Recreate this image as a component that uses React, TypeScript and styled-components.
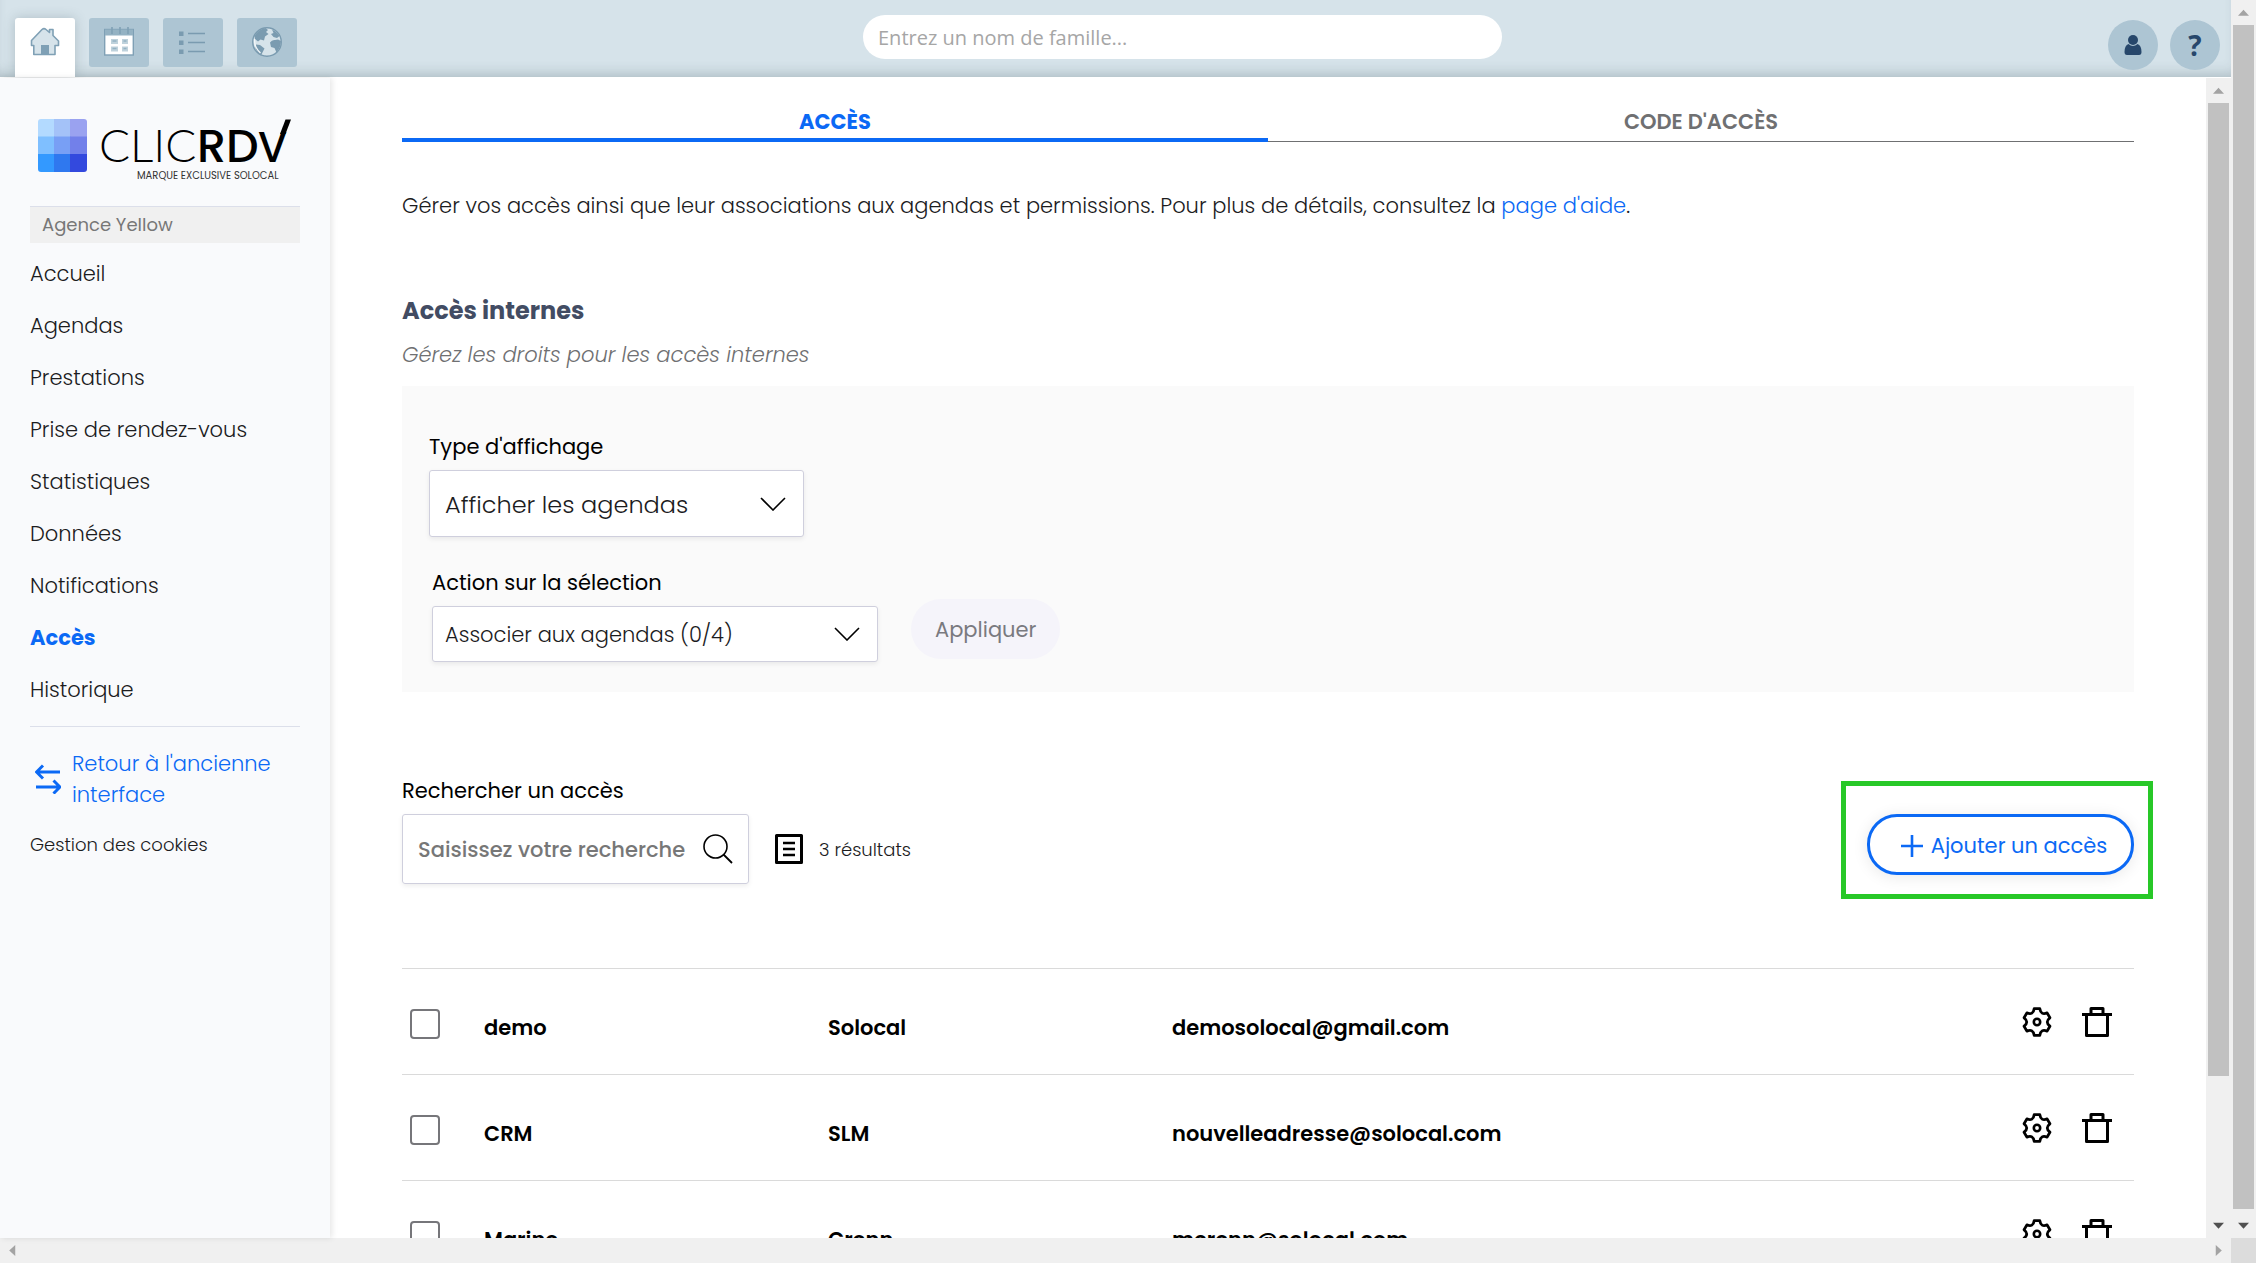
import React from "react";
import styled, { createGlobalStyle } from "styled-components";

const BLUE = "#0b69f5";
const FONT = `Poppins, Inter, "Open Sans", sans-serif`;

const GlobalStyle = createGlobalStyle`
  *, *::before, *::after { box-sizing: border-box; }
  body { margin: 0; background: #fff; font-family: ${FONT}; color: #1c1c1e; overflow: hidden; }
  button, input, select { font-family: inherit; margin: 0; }
  a { text-decoration: none; }
`;

/* ---------- window frame ---------- */

const Window = styled.div`
  display: grid;
  grid-template-columns: minmax(0, 1fr) 25px;
  grid-template-rows: minmax(0, 1fr) 25px;
  height: 100vh;
`;

const Page = styled.div`
  display: flex;
  flex-direction: column;
  min-height: 0;
`;

const Track = styled.div<{ $horizontal?: boolean }>`
  display: flex;
  flex-direction: ${(p) => (p.$horizontal ? "row" : "column")};
  justify-content: space-between;
  flex: 0 0 25px;
  background: #f0f0f0;
`;

const Thumb = styled.div<{ $share: number }>`
  flex: ${(p) => p.$share} 1 0;
  margin: 0 2px;
  background: #c1c1c1;
`;

const Rest = styled.div<{ $share: number }>`
  flex: ${(p) => p.$share} 1 0;
`;

const Arrow = styled.span<{ $dir: "up" | "down" | "left" | "right"; $dim?: boolean }>`
  display: grid;
  place-items: center;
  width: 25px;
  height: 25px;
  &::before {
    content: "";
    width: 11px;
    height: 11px;
    background: ${(p) => (p.$dim ? "#a3a3a3" : "#505050")};
    clip-path: ${(p) =>
      ({
        up: "polygon(0 80%, 50% 25%, 100% 80%)",
        down: "polygon(0 25%, 100% 25%, 50% 80%)",
        left: "polygon(75% 0, 75% 100%, 20% 50%)",
        right: "polygon(25% 0, 80% 50%, 25% 100%)",
      })[p.$dir]};
  }
`;

const Corner = styled.div`
  background: #dcdcdc;
`;

const VerticalBar = ({ thumb, rest }: { thumb: number; rest: number }) => (
  <Track aria-hidden="true">
    <Arrow $dir="up" $dim />
    <Thumb $share={thumb} />
    <Rest $share={rest} />
    <Arrow $dir="down" />
  </Track>
);

/* ---------- header ---------- */

const Header = styled.header`
  display: grid;
  grid-template-columns: 863fr 639fr 729fr;
  flex: 0 0 77px;
  background: #d6e3ea;
  box-shadow: inset 0 -10px 14px -8px rgba(60, 80, 90, 0.3);
`;

const AppTabs = styled.nav`
  display: flex;
  gap: 14px;
  padding: 18px 0 0 15px;
`;

const AppTab = styled.button<{ $active?: boolean }>`
  display: flex;
  justify-content: center;
  align-items: flex-start;
  width: 60px;
  height: ${(p) => (p.$active ? "59px" : "49px")};
  padding: 9px 0 0;
  border: 0;
  border-radius: ${(p) => (p.$active ? "3px 3px 0 0" : "3px")};
  background: ${(p) => (p.$active ? "#fff" : "#adc5d3")};
  box-shadow: ${(p) => (p.$active ? "0 0 12px rgba(60, 80, 90, 0.25)" : "none")};
`;

const FamilySearch = styled.input`
  width: 100%;
  height: 44px;
  margin-top: 15px;
  padding: 0 15px;
  border: 0;
  border-radius: 22px;
  background: #fff;
  font: 500 20px "Open Sans", sans-serif;
  &::placeholder {
    color: #a6a6a6;
    opacity: 1;
  }
`;

const HeaderActions = styled.div`
  display: flex;
  justify-content: flex-end;
  gap: 12px;
  padding: 20px 11px 0 0;
`;

const RoundButton = styled.button`
  display: grid;
  place-items: center;
  width: 50px;
  height: 50px;
  padding: 0;
  border: 0;
  border-radius: 50%;
  background: #adc5d3;
  color: #27476b;
  font: 700 28px "Open Sans", sans-serif;
`;

/* ---------- sidebar ---------- */

const Body = styled.div`
  display: flex;
  flex: 1;
  min-height: 0;
  padding-top: 1px;
`;

const Sidebar = styled.aside`
  flex: 0 0 330px;
  padding: 40px 30px 0;
  background: #f9fafc;
  box-shadow: 2px 0 6px rgba(0, 0, 0, 0.1);
  z-index: 1;
`;

const Logo = styled.svg`
  display: block;
  margin-bottom: 23px;
`;

const Agency = styled.div`
  height: 37px;
  padding: 0 12px;
  border-top: 1px solid #dcdfea;
  background: #f0f0f0;
  color: #777;
  font-size: 18px;
  line-height: 36px;
`;

const Menu = styled.ul`
  margin: 5px 0 0;
  padding: 0 0 10px;
  list-style: none;
  border-bottom: 1px solid #dcdfea;
`;

const MenuLink = styled.a<{ $active?: boolean }>`
  display: block;
  font-size: 21px;
  line-height: 52px;
  font-weight: ${(p) => (p.$active ? 700 : 300)};
  color: ${(p) => (p.$active ? BLUE : "#1c1c1e")};
`;

const BackLink = styled.a`
  display: flex;
  align-items: center;
  gap: 11px;
  margin-top: 21px;
  padding-left: 5px;
  color: ${BLUE};
  font-size: 21px;
  font-weight: 300;
  line-height: 31px;
  svg {
    flex: none;
  }
`;

const CookiesLink = styled.a`
  display: block;
  margin-top: 19px;
  color: #1c1c1e;
  font-size: 18px;
  font-weight: 300;
  line-height: 32px;
`;

/* ---------- content ---------- */

const Main = styled.main`
  flex: 1;
  min-width: 0;
  overflow: hidden;
  padding: 0 72px;
`;

const Tabs = styled.div`
  display: flex;
`;

const Tab = styled.button<{ $active?: boolean }>`
  display: flex;
  justify-content: center;
  align-items: flex-start;
  flex: 1;
  height: 64px;
  padding: 28px 0 0;
  border: 0;
  border-bottom: ${(p) => (p.$active ? `4px solid ${BLUE}` : "1px solid #6f7072")};
  background: none;
  color: ${(p) => (p.$active ? BLUE : "#6f7072")};
  font-size: 21px;
  font-weight: ${(p) => (p.$active ? 700 : 600)};
  line-height: 32px;
`;

const Intro = styled.p`
  margin: 48px 0 0;
  font-size: 21px;
  font-weight: 300;
  line-height: 32px;
  a {
    color: ${BLUE};
  }
`;

const Title = styled.h2`
  margin: 73px 0 0;
  color: #424c63;
  font-size: 24px;
  font-weight: 700;
  line-height: 32px;
`;

const Subtitle = styled.p`
  margin: 12px 0 0;
  color: #6f7072;
  font-size: 21px;
  font-style: italic;
  font-weight: 300;
  line-height: 32px;
`;

const Panel = styled.section`
  display: flex;
  flex-direction: column;
  gap: 30px;
  margin-top: 15px;
  padding: 45px 27px 30px;
  background: #fafafa;
`;

const Label = styled.label`
  display: block;
  margin-bottom: 7px;
  color: #000;
  font-size: 21px;
  font-weight: 400;
  line-height: 32px;
`;

const Line = styled.div`
  display: flex;
  align-items: flex-end;
  gap: 33px;
  padding-left: 3px;
`;

const SelectBox = styled.div<{ $wide?: boolean }>`
  display: grid;
  align-items: center;
  width: ${(p) => (p.$wide ? "446px" : "375px")};
  > * {
    grid-area: 1 / 1;
  }
  > svg {
    justify-self: end;
    margin-right: 18px;
    pointer-events: none;
  }
`;

const Select = styled.select<{ $large?: boolean }>`
  appearance: none;
  width: 100%;
  height: ${(p) => (p.$large ? "67px" : "56px")};
  padding: ${(p) => (p.$large ? "2px 15px 0" : "0 12px")};
  border: 1px solid #cfcfdd;
  border-radius: 3px;
  background: #fff;
  box-shadow: 0 2px 5px rgba(0, 0, 0, 0.07);
  color: #1c1c1e;
  font-size: ${(p) => (p.$large ? "24px" : "21px")};
  font-weight: 300;
`;

const Apply = styled.button`
  height: 60px;
  margin-bottom: 3px;
  padding: 0 24px;
  border: 0;
  border-radius: 30px;
  background: #f5f4fa;
  color: #7a7a7f;
  font-size: 21px;
  font-weight: 400;
`;

const SearchSection = styled.section`
  margin-top: 83px;
`;

const SearchLine = styled.div`
  display: flex;
  align-items: center;
`;

const SearchBox = styled.div`
  display: flex;
  align-items: center;
  gap: 8px;
  width: 347px;
  height: 70px;
  padding: 0 15px;
  border: 1px solid #cfcfdd;
  border-radius: 3px;
  box-shadow: 0 2px 5px rgba(0, 0, 0, 0.07);
  svg {
    flex: none;
  }
`;

const SearchInput = styled.input`
  flex: 1;
  min-width: 0;
  padding: 0;
  border: 0;
  outline: 0;
  background: none;
  font-size: 21px;
  font-weight: 500;
  &::placeholder {
    color: #777;
    opacity: 1;
  }
`;

const Results = styled.div`
  display: flex;
  align-items: center;
  gap: 16px;
  margin-left: 26px;
  font-size: 18px;
  font-weight: 300;
`;

const Highlight = styled.div`
  position: relative;
  align-self: flex-start;
  margin-left: auto;
  &::after {
    content: "";
    position: absolute;
    inset: -33px -19px -24px -26px;
    border: 5px solid #28c828;
    pointer-events: none;
  }
`;

const AddButton = styled.button`
  display: flex;
  justify-content: center;
  align-items: center;
  gap: 8px;
  width: 267px;
  height: 61px;
  padding: 2px 0 0 7px;
  border: 3px solid ${BLUE};
  border-radius: 30px;
  background: #fff;
  box-shadow: 0 2px 16px rgba(0, 0, 0, 0.09);
  color: ${BLUE};
  font-size: 21px;
  font-weight: 400;
`;

const Table = styled.table`
  width: 100%;
  margin-top: 84px;
  border-collapse: collapse;
  table-layout: fixed;
`;

const Row = styled.tr`
  height: 106px;
  border-top: 1px solid #dadada;
`;

const Cell = styled.td<{ $w?: number }>`
  width: ${(p) => (p.$w ? `${p.$w}px` : "auto")};
  padding: 43px 0 0;
  vertical-align: top;
  color: #000;
  font-size: 21px;
  font-weight: 600;
  line-height: 32px;
`;

const CheckCell = styled(Cell)`
  padding: 40px 0 0 8px;
  line-height: 0;
`;

const ToolCell = styled(Cell)`
  padding: 38px 22px 0 0;
`;

const Check = styled.input`
  appearance: none;
  width: 30px;
  height: 30px;
  margin: 0;
  border: 2px solid #76767a;
  border-radius: 4px;
  background: #fff;
`;

const Tools = styled.div`
  display: flex;
  justify-content: flex-end;
  gap: 30px;
`;

const IconButton = styled.button`
  display: flex;
  padding: 0;
  border: 0;
  background: none;
`;

/* ---------- drawings ---------- */

const HomeIcon = () => (
  <svg width="30" height="30" viewBox="0 0 30 30" aria-hidden="true">
    <path
      d="M1.500 15.500V13.500L12 2.500Q14 .8 16 2.500L19.500 5.500V2.500H23V8.500L28.500 14V18.500H25V27.500H3.800V18.500H1.500Z"
      fill="#d6e3ea"
      stroke="#7fa0b5"
      strokeWidth="1.600"
      strokeLinejoin="round"
    />
    <rect x="11" y="18" width="8" height="9.500" fill="#7fa0b5" />
  </svg>
);

const CalendarIcon = () => (
  <svg width="30" height="30" viewBox="0 0 30 30" aria-hidden="true">
    <rect x=".7" y="2.500" width="28.600" height="25.500" fill="#fff" stroke="#7fa0b5" strokeWidth="1.400" />
    <rect x="1" y="2.500" width="28" height="6" fill="#94b2c3" />
    <path d="M8 0v7M16 0v7M24 0v7" stroke="#7fa0b5" strokeWidth="1.600" />
    <path d="M7 12h7v5H7zM18 12h6v5h-6zM7 19.500h7v5H7zM18 19.500h6v5h-6z" fill="#bfd2dc" />
    <path d="M8.500 14h4M19.500 14h3M8.500 21.500h4M19.500 21.500h3" stroke="#94b2c3" strokeWidth="1.500" />
  </svg>
);

const ListIcon = () => (
  <svg width="30" height="30" viewBox="0 0 30 30" aria-hidden="true">
    <path d="M1 4.500h4.500v4.500H1zM1 13.500h4.500V18H1zM1 22.500h4.500V27H1z" fill="#7a9bb0" />
    <path d="M10 6.500h17M10 15.500h17M10 24.500h17" stroke="#7a9bb0" strokeWidth="1.500" />
  </svg>
);

const GlobeIcon = () => (
  <svg width="30" height="30" viewBox="0 0 30 30" aria-hidden="true">
    <circle cx="15" cy="15" r="14.300" fill="#d6e3ea" stroke="#7a9bb0" strokeWidth="1.400" />
    <path d="M2.500 9Q6 2.500 13.500 1L16 3 14 5 16.500 7 13 9.500 12 13.500 8.500 12.500 6 14.500 3 12z" fill="#7a9bb0" />
    <path d="M4 17.500 8 18l4.500 3.500-1.500 3-2 4-3-2.500-2.500-4.500z" fill="#7a9bb0" />
    <path d="M20 2.500Q25 4.500 27.500 9L25 11 21.500 10 19 7 21.500 6z" fill="#7a9bb0" />
    <path d="M18 15.500Q20 12.500 23 13L26 12.500 29 14Q29 20 24.500 25.500L22.500 21 19 20z" fill="#7a9bb0" />
    <path d="M2.500 12Q2 20 8.500 26" fill="none" stroke="#f4f8fa" strokeWidth="1.300" />
  </svg>
);

const UserIcon = () => (
  <svg width="18" height="22" viewBox="0 0 18 22" aria-hidden="true">
    <circle cx="9" cy="6" r="5" fill="#27476b" />
    <path d="M4.500 10Q9 14 13.500 10Q17.500 11.500 17.500 18Q17.500 21 15 21H3Q.5 21 .5 18Q.5 11.500 4.500 10Z" fill="#27476b" />
  </svg>
);

const Chevron = () => (
  <svg width="26" height="14" viewBox="0 0 26 14" aria-hidden="true">
    <path d="M1 1l12 12L25 1" fill="none" stroke="#000" strokeWidth="1.600" />
  </svg>
);

const SwapIcon = () => (
  <svg width="26" height="30" viewBox="0 0 26 30" aria-hidden="true">
    <path d="M8 1.500 1.500 8 8 14.500M2 8h23M18.500 16.500 25 23l-6.500 6.500M24 23H1" fill="none" stroke={BLUE} strokeWidth="3" />
  </svg>
);

const SearchIcon = () => (
  <svg width="30" height="30" viewBox="0 0 30 30" aria-hidden="true">
    <circle cx="12.500" cy="12.500" r="11.500" fill="none" stroke="#000" strokeWidth="1.600" />
    <path d="M20.500 20.500 29 29" stroke="#000" strokeWidth="1.800" />
  </svg>
);

const SheetIcon = () => (
  <svg width="28" height="30" viewBox="0 0 28 30" aria-hidden="true">
    <rect x="1.500" y="1.500" width="25" height="27" fill="none" stroke="#000" strokeWidth="3" strokeLinejoin="round" />
    <path d="M8 9h12M8 15h12M8 21h12" stroke="#000" strokeWidth="2.600" />
  </svg>
);

const PlusIcon = () => (
  <svg width="22" height="22" viewBox="0 0 22 22" aria-hidden="true">
    <path d="M11 0v22M0 11h22" stroke={BLUE} strokeWidth="2.600" />
  </svg>
);

const polar = (radius: number, degrees: number) => {
  const angle = (degrees * Math.PI) / 180;
  return `${(15 + radius * Math.cos(angle)).toFixed(2)} ${(15 + radius * Math.sin(angle)).toFixed(2)}`;
};

/* Six flat teeth joined by hollow curves. */
const gearPath =
  [30, 90, 150, 210, 270, 330]
    .map((a, i) => `${i ? "" : `M${polar(13.6, a - 12)}`}L${polar(13.6, a + 12)}Q${polar(7.6, a + 30)} ${polar(13.6, a + 48)}`)
    .join("") + "Z";

const GearIcon = () => (
  <svg width="30" height="30" viewBox="0 0 30 30" aria-hidden="true">
    <path d={gearPath} fill="none" stroke="#000" strokeWidth="2.800" strokeLinejoin="round" />
    <circle cx="15" cy="15" r="3.200" fill="none" stroke="#000" strokeWidth="2.600" />
  </svg>
);

const TrashIcon = () => (
  <svg width="30" height="30" viewBox="0 0 30 30" aria-hidden="true">
    <path d="M0 7.500h30M4.500 7.500v21h21v-21M9 7.500v-6h12v6" fill="none" stroke="#000" strokeWidth="3" strokeLinejoin="round" />
  </svg>
);

const tiles = ["#b3daff", "#a4c2f8", "#9aa2f0", "#7fbfff", "#789ff5", "#7280ea", "#3399ff", "#2f78ef", "#3349de"];

const ClicRdvLogo = () => (
  <Logo width="270" height="65" viewBox="0 0 270 65" role="img" aria-label="CLICRDV, marque exclusive Solocal">
    <defs>
      <clipPath id="tiles">
        <rect x="8" y="1" width="49" height="53" rx="3" />
      </clipPath>
    </defs>
    <g clipPath="url(#tiles)">
      {tiles.map((fill, i) => (
        <rect key={fill} x={8 + (i % 3) * 16} y={1 + Math.floor(i / 3) * 17.5} width="17" height="18" fill={fill} />
      ))}
    </g>
    <text x="69" y="44" fontFamily="Lato, sans-serif" fontSize="46" fontWeight="300">
      CLIC
    </text>
    <text x="167" y="44" fontSize="46" fontWeight="500">
      RD
    </text>
    <text x="228" y="44" fontSize="42" fontWeight="500">
      V
    </text>
    <path d="M250 16 255.500 1.500H261L255.500 16z" />
    <text x="107" y="61" fontSize="10" fill="#333">
      MARQUE EXCLUSIVE SOLOCAL
    </text>
  </Logo>
);

/* ---------- data ---------- */

const menu = ["Accueil", "Agendas", "Prestations", "Prise de rendez-vous", "Statistiques", "Données", "Notifications", "Accès", "Historique"];

const users = [
  { first: "demo", last: "Solocal", mail: "demosolocal@gmail.com" },
  { first: "CRM", last: "SLM", mail: "nouvelleadresse@solocal.com" },
  { first: "Marine", last: "Crenn", mail: "mcrenn@solocal.com" },
];

export default function App() {
  return (
    <>
      <GlobalStyle />
      <Window>
        <Page>
          <Header>
            <AppTabs>
              <AppTab $active aria-label="Accueil"><HomeIcon /></AppTab>
              <AppTab aria-label="Agenda"><CalendarIcon /></AppTab>
              <AppTab aria-label="Liste"><ListIcon /></AppTab>
              <AppTab aria-label="Site"><GlobeIcon /></AppTab>
            </AppTabs>
            <FamilySearch type="text" aria-label="Nom de famille" placeholder="Entrez un nom de famille..." />
            <HeaderActions>
              <RoundButton aria-label="Compte"><UserIcon /></RoundButton>
              <RoundButton>?</RoundButton>
            </HeaderActions>
          </Header>
          <Body>
            <Sidebar>
              <ClicRdvLogo />
              <Agency>Agence Yellow</Agency>
              <Menu>
                {menu.map((item) => (
                  <li key={item}>
                    <MenuLink href="#" $active={item === "Accès"}>{item}</MenuLink>
                  </li>
                ))}
              </Menu>
              <BackLink href="#">
                <SwapIcon />
                <span>Retour à l'ancienne interface</span>
              </BackLink>
              <CookiesLink href="#">Gestion des cookies</CookiesLink>
            </Sidebar>
            <Main>
              <Tabs>
                <Tab $active>ACCÈS</Tab>
                <Tab>CODE D'ACCÈS</Tab>
              </Tabs>
              <Intro>
                Gérer vos accès ainsi que leur associations aux agendas et permissions. Pour plus de détails, consultez la{" "}
                <a href="#">page d'aide</a>.
              </Intro>
              <Title>Accès internes</Title>
              <Subtitle>Gérez les droits pour les accès internes</Subtitle>
              <Panel>
                <div>
                  <Label htmlFor="display">Type d'affichage</Label>
                  <SelectBox>
                    <Select id="display" $large>
                      <option>Afficher les agendas</option>
                    </Select>
                    <Chevron />
                  </SelectBox>
                </div>
                <Line>
                  <div>
                    <Label htmlFor="action">Action sur la sélection</Label>
                    <SelectBox $wide>
                      <Select id="action">
                        <option>Associer aux agendas (0/4)</option>
                      </Select>
                      <Chevron />
                    </SelectBox>
                  </div>
                  <Apply>Appliquer</Apply>
                </Line>
              </Panel>
              <SearchSection>
                <Label htmlFor="search">Rechercher un accès</Label>
                <SearchLine>
                  <SearchBox>
                    <SearchInput id="search" type="text" placeholder="Saisissez votre recherche" />
                    <SearchIcon />
                  </SearchBox>
                  <Results>
                    <SheetIcon />
                    <span>3 résultats</span>
                  </Results>
                  <Highlight>
                    <AddButton>
                      <PlusIcon />
                      Ajouter un accès
                    </AddButton>
                  </Highlight>
                </SearchLine>
              </SearchSection>
              <Table>
                <tbody>
                  {users.map((user) => (
                    <Row key={user.mail}>
                      <CheckCell $w={82}>
                        <Check type="checkbox" aria-label={`Sélectionner ${user.first}`} />
                      </CheckCell>
                      <Cell $w={344}>{user.first}</Cell>
                      <Cell $w={344}>{user.last}</Cell>
                      <Cell>{user.mail}</Cell>
                      <ToolCell $w={160}>
                        <Tools>
                          <IconButton aria-label="Paramètres"><GearIcon /></IconButton>
                          <IconButton aria-label="Supprimer"><TrashIcon /></IconButton>
                        </Tools>
                      </ToolCell>
                    </Row>
                  ))}
                </tbody>
              </Table>
            </Main>
            <VerticalBar thumb={973} rest={137} />
          </Body>
        </Page>
        <VerticalBar thumb={1184} rest={4} />
        <Track $horizontal aria-hidden="true">
          <Arrow $dir="left" $dim />
          <Arrow $dir="right" $dim />
        </Track>
        <Corner />
      </Window>
    </>
  );
}
